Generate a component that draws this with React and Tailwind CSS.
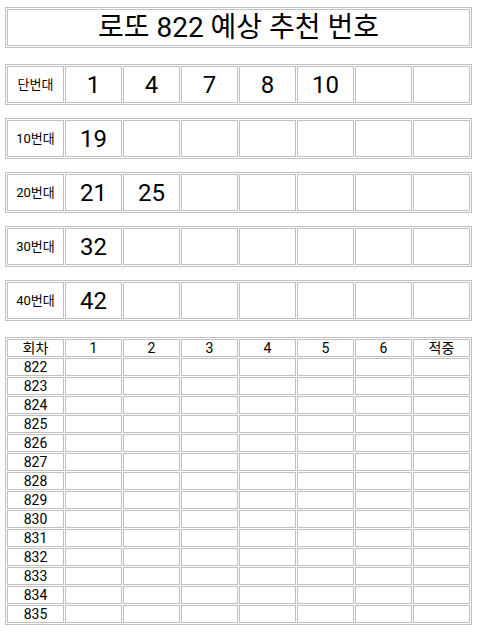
import React from 'react';

const ranges = [
    { label: '단번대', nums: [1, 4, 7, 8, 10] },
    { label: '10번대', nums: [19] },
    { label: '20번대', nums: [21, 25] },
    { label: '30번대', nums: [32] },
    { label: '40번대', nums: [42] },
];

const rounds = Array.from({ length: 14 }, (_, i) => 822 + i);

const cell = 'border border-[#c0c0c0] p-0';

function RangeTable({ label, nums, first }) {
    const cells = [...nums, ...Array(7 - nums.length).fill('')];
    return (
        <table className={`w-full table-fixed border-separate border-spacing-[1px] border border-[#c0c0c0] ${first ? 'mt-[16px]' : 'mt-[13px]'}`}>
            <tbody>
                <tr>
                    <td className={`${cell} h-[37px] text-center text-[13px] leading-none`}>{label}</td>
                    {cells.map((n, i) => (
                        <td key={i} className={`${cell} h-[37px] text-center text-[24px] leading-none`}>{n}</td>
                    ))}
                </tr>
            </tbody>
        </table>
    );
}

export default function App() {
    return (
        <div className="px-[5px] pt-[7px] pb-[8px] bg-white text-black" style={{ fontFamily: 'Roboto, "Noto Sans CJK KR", sans-serif' }}>
            {/* title */}
            <table className="w-full border-separate border-spacing-[1px] border border-[#c0c0c0]">
                <tbody>
                    <tr>
                        <td className={`${cell} h-[37px] text-center text-[28px] leading-none`}>로또 822 예상 추천 번호</td>
                    </tr>
                </tbody>
            </table>

            {ranges.map((r, i) => (
                <RangeTable key={r.label} label={r.label} nums={r.nums} first={i === 0} />
            ))}

            {/* history table */}
            <table className="w-full table-fixed border-separate border-spacing-[1px] border border-[#c0c0c0] mt-[16px]">
                <thead>
                    <tr>
                        {['회차', '1', '2', '3', '4', '5', '6', '적중'].map((h) => (
                            <th key={h} className={`${cell} h-[18px] text-center text-[14px] font-normal leading-none`}>{h}</th>
                        ))}
                    </tr>
                </thead>
                <tbody>
                    {rounds.map((r) => (
                        <tr key={r}>
                            <td className={`${cell} h-[18px] text-center text-[14px] leading-none`}>{r}</td>
                            {Array.from({ length: 7 }).map((_, i) => (
                                <td key={i} className={`${cell} h-[18px]`}></td>
                            ))}
                        </tr>
                    ))}
                </tbody>
            </table>
        </div>
    );
}
